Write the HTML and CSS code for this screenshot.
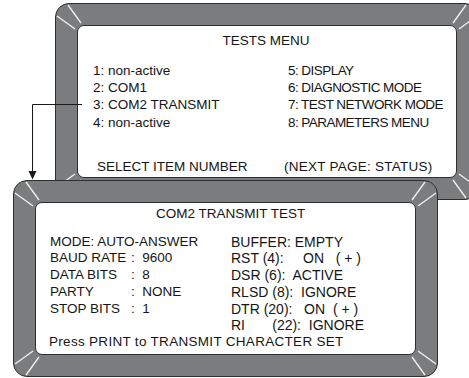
FILE: index.html
```html
<!DOCTYPE html>
<html>
<head>
<meta charset="utf-8">
<link rel="stylesheet" href="styles.css">
</head>
<body>
<div class="stage">
  <div class="screen screen-menu">
    <div class="glass">
      <div class="menu-title">TESTS MENU</div>
      <div class="menu-cols">
        <div class="col col-left">
          <div>1: non-active</div>
          <div>2: COM1</div>
          <div>3: COM2 TRANSMIT</div>
          <div>4: non-active</div>
        </div>
        <div class="col col-right">
          <div>5: DISPLAY</div>
          <div>6: DIAGNOSTIC MODE</div>
          <div>7: TEST NETWORK MODE</div>
          <div>8: PARAMETERS MENU</div>
        </div>
      </div>
      <div class="menu-foot">
        <span class="foot-left">SELECT ITEM NUMBER</span>
        <span class="foot-right">(NEXT PAGE: STATUS)</span>
      </div>
    </div>
    <svg class="corner c-tl" viewBox="0 0 30 30"><line x1="13" y1="2" x2="26" y2="20"/><line x1="2" y1="13" x2="20" y2="26"/></svg>
    <svg class="corner c-tr" viewBox="0 0 30 30"><line x1="13" y1="2" x2="26" y2="20"/><line x1="2" y1="13" x2="20" y2="26"/></svg>
    <svg class="corner c-bl" viewBox="0 0 30 30"><line x1="13" y1="2" x2="26" y2="20"/><line x1="2" y1="13" x2="20" y2="26"/></svg>
    <svg class="corner c-br" viewBox="0 0 30 30"><line x1="13" y1="2" x2="26" y2="20"/><line x1="2" y1="13" x2="20" y2="26"/></svg>
  </div>

  <div class="screen screen-test">
    <div class="glass">
      <div class="test-title">COM2 TRANSMIT TEST</div>
      <div class="test-grid">
        <div class="col test-left">
          <div>MODE: AUTO-ANSWER</div>
          <div class="kv"><span class="k">BAUD RATE</span><span>:&nbsp; 9600</span></div>
          <div class="kv"><span class="k">DATA BITS</span><span>:&nbsp; 8</span></div>
          <div class="kv"><span class="k">PARTY</span><span>:&nbsp; NONE</span></div>
          <div class="kv"><span class="k">STOP BITS</span><span>:&nbsp; 1</span></div>
        </div>
        <div class="col test-right">
          <div>BUFFER: EMPTY</div>
          <div class="pre">RST (4):     ON   ( + )</div>
          <div class="pre">DSR (6):  ACTIVE</div>
          <div class="pre">RLSD (8):  IGNORE</div>
          <div class="pre">DTR (20):   ON  ( + )</div>
          <div class="pre">RI       (22):  IGNORE</div>
        </div>
      </div>
      <div class="test-foot">Press PRINT to TRANSMIT CHARACTER SET</div>
    </div>
    <svg class="corner c-tl" viewBox="0 0 30 30"><line x1="13" y1="2" x2="26" y2="20"/><line x1="2" y1="13" x2="20" y2="26"/></svg>
    <svg class="corner c-tr" viewBox="0 0 30 30"><line x1="13" y1="2" x2="26" y2="20"/><line x1="2" y1="13" x2="20" y2="26"/></svg>
    <svg class="corner c-bl" viewBox="0 0 30 30"><line x1="13" y1="2" x2="26" y2="20"/><line x1="2" y1="13" x2="20" y2="26"/></svg>
    <svg class="corner c-br" viewBox="0 0 30 30"><line x1="13" y1="2" x2="26" y2="20"/><line x1="2" y1="13" x2="20" y2="26"/></svg>
  </div>

  <svg class="connector" width="469" height="378" viewBox="0 0 469 378">
    <path d="M82 104.5 H32.5 V172" fill="none" stroke="#1a1a1a" stroke-width="1"/>
    <polygon points="28.5,171 36.5,171 32.5,179.5" fill="#1a1a1a"/>
  </svg>
</div>
</body>
</html>
```

FILE: styles.css
```css
html, body {
  margin: 0;
  padding: 0;
  background: #ffffff;
}

.stage {
  position: relative;
  width: 469px;
  height: 378px;
  overflow: hidden;
  font-family: "Liberation Sans", Arial, sans-serif;
  font-size: 13.5px;
  color: #151515;
  background: #ffffff;
  padding-top: 3px;
  box-sizing: border-box;
  white-space: nowrap;
}

.screen {
  position: relative;
  box-sizing: border-box;
  background: #7b7c7e;
  border: 1px solid #2e2e2e;
  border-radius: 14px;
  padding: 21px;
}

.screen-menu {
  margin-left: 55px;
  width: 424px;
  height: 197px;
}

.screen-test {
  z-index: 1;
  margin-left: 13px;
  margin-top: -20px;
  width: 425px;
  height: 197px;
}

.glass {
  box-sizing: border-box;
  height: 100%;
  background: #ffffff;
  border: 1px solid #2e2e2e;
  border-radius: 7px;
  display: flex;
  flex-direction: column;
}

.corner {
  position: absolute;
  width: 30px;
  height: 30px;
  stroke: #f2f2f2;
  stroke-width: 1.3;
  fill: none;
}
.c-tl { left: -1px; top: -1px; }
.c-tr { right: -1px; top: -1px; transform: scaleX(-1); }
.c-bl { left: -1px; bottom: -1px; transform: scaleY(-1); }
.c-br { right: -1px; bottom: -1px; transform: scale(-1, -1); }

/* Tests menu */
.menu-title {
  line-height: 17px;
  margin-top: 5.5px;
  text-align: center;
  padding-right: 2px;
}

.menu-cols {
  display: flex;
  margin-top: 13px;
  padding-left: 15px;
  line-height: 17.4px;
}

.col-left { width: 195px; }
.col-right { letter-spacing: -0.55px; }

.menu-foot {
  display: flex;
  margin-top: 27px;
  line-height: 17px;
  padding-left: 19px;
}
.foot-left { width: 187px; }
.foot-right { letter-spacing: 0.25px; }

/* COM2 test */
.test-title {
  line-height: 17px;
  margin-top: 1.5px;
  padding-left: 120px;
}

.test-grid {
  display: flex;
  margin-top: 12px;
  padding-left: 14px;
  line-height: 16.8px;
}

.test-left { width: 181px; flex-shrink: 0; }

.kv { display: flex; }
.kv .k { width: 81px; flex-shrink: 0; }

.test-right { font-size: 14px; }

.pre { white-space: pre; }

.test-foot {
  line-height: 16.8px;
  padding-left: 13px;
  letter-spacing: 0.3px;
}

.connector {
  position: absolute;
  left: 0;
  top: 0;
  z-index: 2;
  pointer-events: none;
}
```
